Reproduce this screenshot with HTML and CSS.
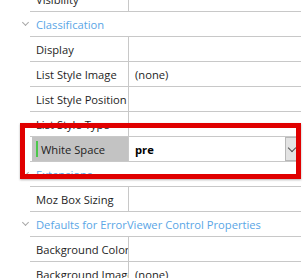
FILE: index.html
```html
<!doctype html>
<html>

<head>
    <meta charset="utf-8" />
    <title>Properties</title>
    <link rel="stylesheet" href="styles.css">
</head>

<body>
    <div class="grid">
        <div class="row">
            <div class="gutter"></div>
            <div class="line">
                <div class="name">Visibility</div>
                <div class="value"></div>
            </div>
        </div>
        <div class="row cat">
            <div class="gutter"><span class="chev"></span></div>
            <div class="line">Classification</div>
        </div>
        <div class="row">
            <div class="gutter"></div>
            <div class="line">
                <div class="name">Display</div>
                <div class="value"></div>
            </div>
        </div>
        <div class="row">
            <div class="gutter"></div>
            <div class="line">
                <div class="name">List Style Image</div>
                <div class="value">(none)</div>
            </div>
        </div>
        <div class="row">
            <div class="gutter"></div>
            <div class="line">
                <div class="name">List Style Position</div>
                <div class="value"></div>
            </div>
        </div>
        <div class="row">
            <div class="gutter"></div>
            <div class="line">
                <div class="name">List Style Type</div>
                <div class="value"></div>
            </div>
        </div>
        <div class="row selected">
            <div class="gutter"></div>
            <div class="line">
                <div class="name"><span class="mark"></span>White Space</div>
                <div class="value edit">
                    <span class="text">pre</span>
                    <span class="drop"></span>
                </div>
            </div>
        </div>
        <div class="row cat">
            <div class="gutter"><span class="chev"></span></div>
            <div class="line">Extensions</div>
        </div>
        <div class="row">
            <div class="gutter"></div>
            <div class="line">
                <div class="name">Moz Box Sizing</div>
                <div class="value"></div>
            </div>
        </div>
        <div class="row cat">
            <div class="gutter"><span class="chev"></span></div>
            <div class="line">Defaults for ErrorViewer Control Properties</div>
        </div>
        <div class="row">
            <div class="gutter"></div>
            <div class="line">
                <div class="name">Background Color</div>
                <div class="value"></div>
            </div>
        </div>
        <div class="row">
            <div class="gutter"></div>
            <div class="line">
                <div class="name">Background Image</div>
                <div class="value">(none)</div>
            </div>
        </div>
    </div>
    <div class="highlight"></div>
</body>

</html>
```

FILE: styles.css
```css
* {
    box-sizing: border-box;
}

html,
body {
    margin: 0;
    padding: 0;
    width: 100%;
    height: 100%;
    overflow: hidden;
    background: white;
    font-family: 'Open Sans', sans-serif;
    font-size: 11.2px;
    color: #1e1e1e;
}

.grid {
    margin-top: -13px;
    width: 301px;
}

.row {
    display: flex;
    height: 25px;
}

.gutter {
    width: 30px;
    flex: none;
    position: relative;
}

.line {
    flex: 1;
    display: flex;
    align-items: center;
    border-bottom: 1px solid #c8c8c8;
    white-space: nowrap;
    overflow: hidden;
}

.name {
    width: 99px;
    height: 100%;
    flex: none;
    display: flex;
    align-items: center;
    padding-left: 6px;
    border-right: 1px solid #c8c8c8;
    overflow: hidden;
}

.value {
    flex: 1;
    height: 100%;
    display: flex;
    align-items: center;
    padding-left: 6px;
}

.cat .line {
    color: #5aa6e6;
    padding-left: 6px;
}

.chev {
    position: absolute;
    left: 23px;
    top: 8px;
    width: 5px;
    height: 5px;
    border-right: 1px solid #a8a8a8;
    border-bottom: 1px solid #a8a8a8;
    transform: rotate(45deg);
}

.selected .name {
    margin-left: 2px;
    width: 97px;
    padding-left: 4px;
    background: #c3c3c3;
}

.mark {
    width: 2px;
    height: 16px;
    margin-right: 3px;
    background: #4cc84c;
}

.edit {
    padding-right: 0;
}

.edit .text {
    flex: 1;
    font-weight: bold;
    color: black;
}

.drop {
    width: 16px;
    height: 24px;
    flex: none;
    background: #e3e3e3;
    border: 1px solid #b8b8b8;
    position: relative;
}

.drop::after {
    content: "";
    position: absolute;
    left: 3px;
    top: 7px;
    width: 5px;
    height: 5px;
    border-right: 1px solid #505050;
    border-bottom: 1px solid #505050;
    transform: rotate(45deg);
}

.highlight {
    position: absolute;
    left: 20px;
    top: 123px;
    width: 281px;
    height: 56px;
    border: 5px solid #e00000;
    box-shadow: 0 1px 2px rgba(0, 0, 0, 0.3);
}
```
